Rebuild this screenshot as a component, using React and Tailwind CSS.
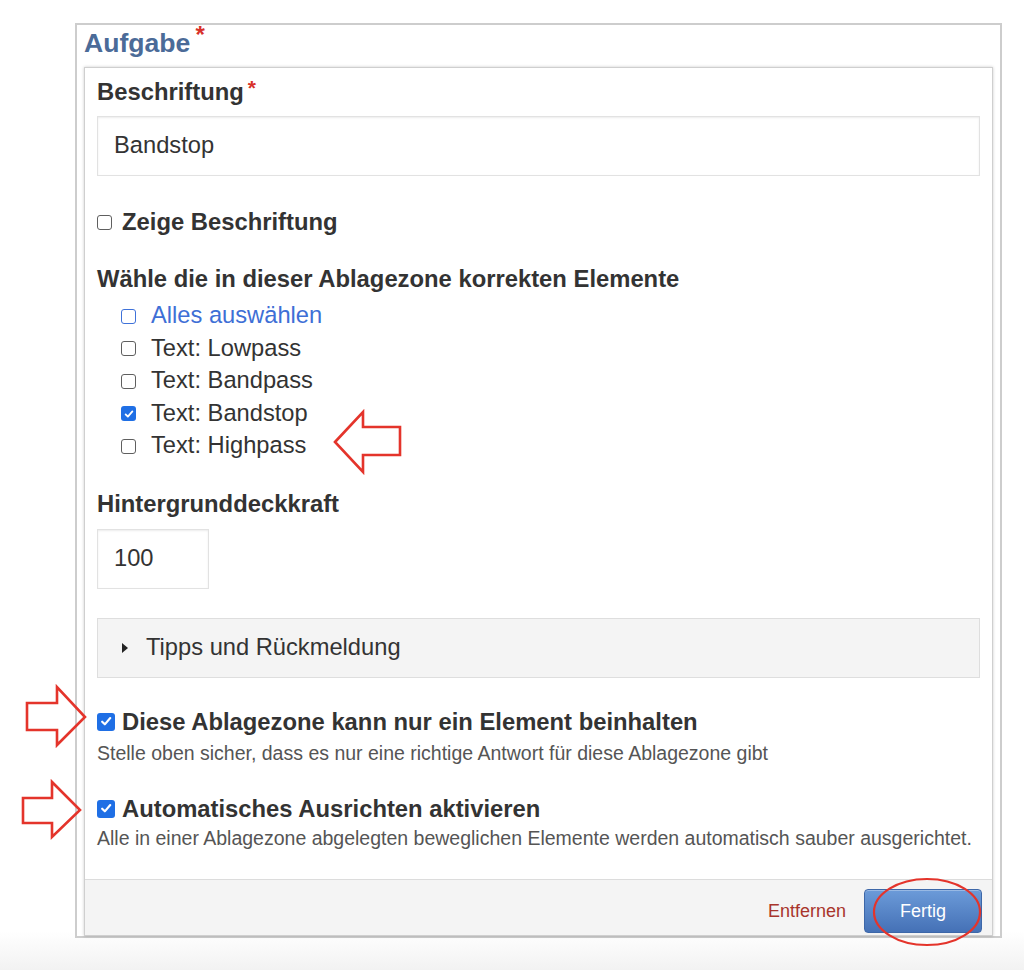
import React from 'react'

const font = { fontFamily: '"Liberation Sans", Arial, Helvetica, sans-serif' }

function Box({ checked, size = 'sm', blue }) {
  const dims = size === 'lg' ? 'w-[18px] h-[18px]' : 'w-[15px] h-[15px]'
  if (checked) {
    return (
      <span className={`${dims} shrink-0 rounded-[3px] bg-[#1f6fe5] flex items-center justify-center`}>
        <svg viewBox="0 0 16 16" className="w-[80%] h-[80%]" fill="none" stroke="white" strokeWidth="2.4" strokeLinecap="round" strokeLinejoin="round">
          <path d="M3.5 8.5l3 3 6-7" />
        </svg>
      </span>
    )
  }
  return (
    <span
      className={`${dims} shrink-0 rounded-[3px] bg-white border-[1.5px] ${
        blue ? 'border-[#3f72d9]' : 'border-[#5f5f5f]'
      }`}
    />
  )
}

function ListItem({ label, checked, blue }) {
  return (
    <div className="flex items-center h-[32.5px]">
      <span className="w-[15px] flex"><Box checked={checked} blue={blue} /></span>
      <span className={`ml-[15px] text-[23.7px] ${blue ? 'text-[#3e6fd6]' : 'text-[#333]'}`}>{label}</span>
    </div>
  )
}

function Star({ className = '' }) {
  return <span className={`text-[#d8312a] align-top relative ${className}`}>*</span>
}

export default function App() {
  return (
    <div className="relative w-full h-[970px] bg-linear-to-b from-white from-[96%] to-[#f2f2f2] overflow-hidden" style={font}>
      <div className="pt-[23px]">
        <div className="ml-[75px] w-[927px] h-[915px] border-2 border-[#cdcdcd] bg-white flex flex-col">
          {/* Title */}
          <div className="mt-[3px] ml-[7px] h-[30px] leading-[30px] text-[26.6px] font-bold text-[#4b6b98]">
            Aufgabe<Star className="ml-[5px] -top-[8px] text-[24px]" />
          </div>

          {/* Panel */}
          <div className="mt-[9px] ml-[7px] w-[909px] flex-1 border border-[#cfcfcf] shadow-[0_0_3px_rgba(0,0,0,0.2)] flex flex-col">
            <div className="flex-1 px-[12px] pt-[10px] text-[#333]">
              <div className="h-[28px] leading-[28px] text-[23.8px] font-bold">
                Beschriftung<Star className="ml-[4px] -top-[4px] text-[21px]" />
              </div>
              <div className="mt-[10px] h-[60px] border border-[#e2e2e2] shadow-[inset_0_1px_2px_rgba(0,0,0,0.08)] flex items-center px-[16px] text-[23.7px]">
                Bandstop
              </div>

              <div className="mt-[32px] h-[28px] flex items-center">
                <Box />
                <span className="ml-[10px] text-[23.8px] font-bold">Zeige Beschriftung</span>
              </div>

              <div className="mt-[29px] h-[28px] leading-[28px] text-[23.8px] font-bold">
                Wähle die in dieser Ablagezone korrekten Elemente
              </div>
              <div className="mt-[7px] pl-[24px]">
                <ListItem label="Alles auswählen" blue />
                <ListItem label="Text: Lowpass" />
                <ListItem label="Text: Bandpass" />
                <ListItem label="Text: Bandstop" checked />
                <ListItem label="Text: Highpass" />
              </div>

              <div className="mt-[27px] h-[28px] leading-[28px] text-[23.8px] font-bold">Hintergrunddeckkraft</div>
              <div className="mt-[11px] w-[112px] h-[60px] border border-[#e2e2e2] shadow-[inset_0_1px_2px_rgba(0,0,0,0.08)] flex items-center px-[16px] text-[23.7px]">
                100
              </div>

              <div className="mt-[29px] h-[60px] border border-[#dedede] bg-[#f4f4f4] flex items-center pl-[24px]">
                <svg width="6" height="10" viewBox="0 0 6 10" className="shrink-0">
                  <path d="M0 0L6 5L0 10Z" fill="#222" />
                </svg>
                <span className="ml-[18px] text-[23.7px]">Tipps und Rückmeldung</span>
              </div>

              <div className="mt-[30px] h-[28px] flex items-center">
                <Box checked size="lg" />
                <span className="ml-[7px] text-[23.8px] font-bold">Diese Ablagezone kann nur ein Element beinhalten</span>
              </div>
              <div className="mt-[5px] h-[24px] leading-[24px] text-[19.5px] text-[#555]">
                Stelle oben sicher, dass es nur eine richtige Antwort für diese Ablagezone gibt
              </div>

              <div className="mt-[30px] h-[28px] flex items-center">
                <Box checked size="lg" />
                <span className="ml-[7px] text-[23.8px] font-bold">Automatisches Ausrichten aktivieren</span>
              </div>
              <div className="mt-[3px] h-[24px] leading-[24px] text-[19.5px] text-[#555]">
                Alle in einer Ablagezone abgelegten beweglichen Elemente werden automatisch sauber ausgerichtet.
              </div>
            </div>

            {/* Footer */}
            <div className="h-[56px] border-t border-[#dcdcdc] bg-[#f4f4f4] flex items-start justify-end pt-[9px] pr-[10px]">
              <span className="mt-[9px] text-[18px] text-[#a8352c]">Entfernen</span>
              <button className="ml-[18px] w-[118px] h-[44px] rounded-[4px] border border-[#3d67a8] bg-linear-to-b from-[#6c9bd9] to-[#4571b6] text-white text-[18px] shadow-[inset_0_1px_0_rgba(255,255,255,0.3)]">
                Fertig
              </button>
            </div>
          </div>
        </div>
      </div>

      {/* Annotations */}
      <svg className="absolute inset-0 pointer-events-none" width="1024" height="970" viewBox="0 0 1024 970" fill="none" stroke="#e4342b" strokeWidth="2.6" strokeLinejoin="miter">
        <polygon points="335,442 363,412 363,427 400,427 400,455 363,455 363,472" />
        <polygon points="27,703 57,703 57,687 85,717 57,745 57,730 27,730" />
        <polygon points="23,798 52,798 52,782 80,810 52,837 52,823 23,823" />
        <ellipse cx="927" cy="912" rx="53" ry="33" strokeWidth="2.2" />
      </svg>
    </div>
  )
}
